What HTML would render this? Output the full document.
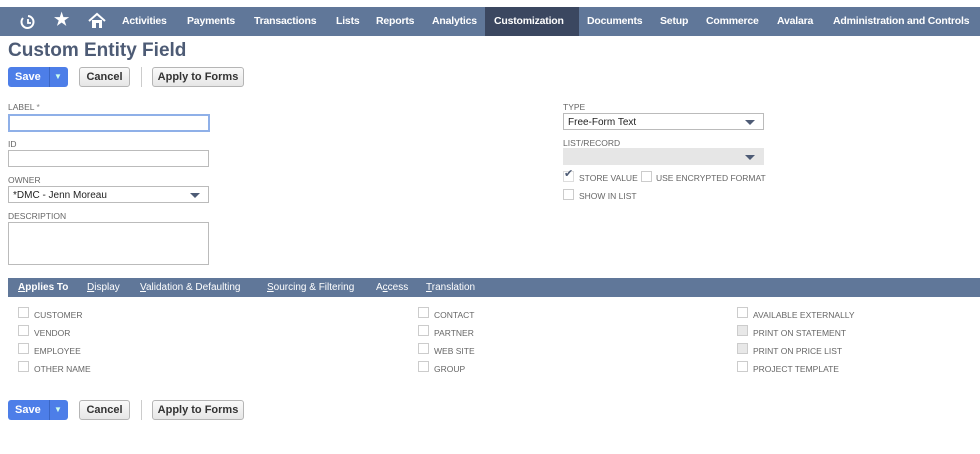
<!DOCTYPE html>
<html><head><style>
*{box-sizing:border-box;margin:0;padding:0}
body{width:980px;height:454px;background:#fff;font-family:"Liberation Sans",sans-serif;position:relative;overflow:hidden;color:#333}
.abs{position:absolute;white-space:nowrap}
.nav{position:absolute;left:0;top:7px;width:980px;height:29px;background:#607799}
.nav span{position:absolute;top:8px;color:#fff;font-weight:bold;font-size:10.5px;white-space:nowrap;letter-spacing:-0.2px}
.act{position:absolute;left:485px;top:0;width:94px;height:29px;background:#3b4760}
h1{position:absolute;left:8px;top:40px;font-size:19px;color:#4d5b75;font-weight:bold}
.btn{position:absolute;height:20px;border:1px solid #b5b5b5;border-radius:3px;background:linear-gradient(#fafafa,#e6e6e6);font-size:11px;font-weight:bold;color:#333;text-align:center;line-height:18px}
.save{position:absolute;height:20px;width:60px;border-radius:3px;background:#4d7ee8;color:#fff;font-size:11px;font-weight:bold;line-height:20px}
.save b{position:absolute;left:7px}
.save i{position:absolute;left:41px;top:0;width:1px;height:20px;background:#3a66c4}
.save em{position:absolute;left:46px;top:0;font-style:normal;font-size:8px;color:#cfe}
.sep{position:absolute;width:1px;height:20px;background:#ccc}
.lbl{position:absolute;font-size:8.5px;color:#666;white-space:nowrap}
.inp{position:absolute;border:1px solid #bbb;background:#fff;height:17px}
.sel{font-size:10px;color:#222;padding:3px 4px}
.tri{position:absolute;right:8px;top:6px;width:0;height:0;border-left:5px solid transparent;border-right:5px solid transparent;border-top:5px solid #4d5b75}
.cb{position:absolute;width:11px;height:11px;border:1px solid #ccc;background:#fff}
.ct{position:absolute;font-size:8.5px;color:#666;white-space:nowrap}
.tabs{position:absolute;left:8px;top:278px;width:972px;height:19px;background:#607799}
.tabs span{position:absolute;top:4px;color:#fff;font-size:10px;white-space:nowrap}
.tabs u{text-decoration:underline}
</style></head><body>
<div class="nav">
<div class="act"></div>
<svg class="abs" style="left:20px;top:6px" width="16" height="17" viewBox="0 0 16 17"><path d="M3 5 A6 6 0 1 0 8 3" fill="none" stroke="#fff" stroke-width="2"/><path d="M8 6v4h3" fill="none" stroke="#fff" stroke-width="1.8"/></svg>
<span style="left:54px;top:3px;font-size:17px">★</span>
<svg class="abs" style="left:88px;top:5px" width="18" height="17" viewBox="0 0 18 17"><path d="M1 9 L9 2 L17 9" fill="none" stroke="#fff" stroke-width="2"/><path d="M4 8v8h10V8" fill="#fff"/><rect x="8" y="11" width="3" height="5" fill="#607799"/></svg>
<span style="left:122px">Activities</span><span style="left:187px">Payments</span><span style="left:254px">Transactions</span><span style="left:336px">Lists</span><span style="left:376px">Reports</span><span style="left:432px">Analytics</span><span style="left:494px">Customization</span><span style="left:587px">Documents</span><span style="left:660px">Setup</span><span style="left:706px">Commerce</span><span style="left:777px">Avalara</span><span style="left:833px">Administration and Controls</span>
</div>
<h1>Custom Entity Field</h1>
<div class="save" style="left:8px;top:67px"><b>Save</b><i></i><em>▼</em></div>
<div class="btn" style="left:79px;top:67px;width:51px">Cancel</div>
<div class="sep" style="left:141px;top:67px"></div>
<div class="btn" style="left:152px;top:67px;width:92px">Apply to Forms</div>

<div class="lbl" style="left:8px;top:102px">LABEL <span style="color:#888">*</span></div>
<div class="inp" style="left:8px;top:114px;width:202px;height:18px;border:2px solid #8fb0e8"></div>
<div class="lbl" style="left:8px;top:139px">ID</div>
<div class="inp" style="left:8px;top:150px;width:201px"></div>
<div class="lbl" style="left:8px;top:175px">OWNER</div>
<div class="inp sel" style="left:8px;top:186px;width:201px">*DMC - Jenn Moreau<div class="tri"></div></div>
<div class="lbl" style="left:8px;top:211px">DESCRIPTION</div>
<div class="inp" style="left:8px;top:222px;width:201px;height:43px"></div>

<div class="lbl" style="left:563px;top:102px">TYPE</div>
<div class="inp sel" style="left:563px;top:113px;width:201px">Free-Form Text<div class="tri"></div></div>
<div class="lbl" style="left:563px;top:138px">LIST/RECORD</div>
<div class="inp" style="left:563px;top:148px;width:201px;background:#e6e6e6;border-color:#e6e6e6"><div class="tri"></div></div>
<div class="cb" style="left:563px;top:171px;border-color:#ddd"></div><div class="ct" style="left:564px;top:167px;font-size:11px;color:#4d5b75">✔</div>
<div class="ct" style="left:579px;top:173px">STORE VALUE</div>
<div class="cb" style="left:641px;top:171px"></div><div class="ct" style="left:656px;top:173px">USE ENCRYPTED FORMAT</div>
<div class="cb" style="left:563px;top:189px"></div><div class="ct" style="left:579px;top:191px">SHOW IN LIST</div>

<div class="tabs">
<span style="left:10px;font-weight:bold"><u>A</u>pplies To</span><span style="left:79px"><u>D</u>isplay</span><span style="left:132px"><u>V</u>alidation &amp; Defaulting</span><span style="left:259px"><u>S</u>ourcing &amp; Filtering</span><span style="left:368px">A<u>c</u>cess</span><span style="left:418px"><u>T</u>ranslation</span>
</div>

<div class="cb" style="left:18px;top:307px"></div><div class="ct" style="left:34px;top:310px">CUSTOMER</div>
<div class="cb" style="left:18px;top:325px"></div><div class="ct" style="left:34px;top:328px">VENDOR</div>
<div class="cb" style="left:18px;top:343px"></div><div class="ct" style="left:34px;top:346px">EMPLOYEE</div>
<div class="cb" style="left:18px;top:361px"></div><div class="ct" style="left:34px;top:364px">OTHER NAME</div>
<div class="cb" style="left:418px;top:307px"></div><div class="ct" style="left:434px;top:310px">CONTACT</div>
<div class="cb" style="left:418px;top:325px"></div><div class="ct" style="left:434px;top:328px">PARTNER</div>
<div class="cb" style="left:418px;top:343px"></div><div class="ct" style="left:434px;top:346px">WEB SITE</div>
<div class="cb" style="left:418px;top:361px"></div><div class="ct" style="left:434px;top:364px">GROUP</div>
<div class="cb" style="left:737px;top:307px"></div><div class="ct" style="left:753px;top:310px">AVAILABLE EXTERNALLY</div>
<div class="cb" style="left:737px;top:325px;background:#e8e8e8"></div><div class="ct" style="left:753px;top:328px">PRINT ON STATEMENT</div>
<div class="cb" style="left:737px;top:343px;background:#e8e8e8"></div><div class="ct" style="left:753px;top:346px">PRINT ON PRICE LIST</div>
<div class="cb" style="left:737px;top:361px"></div><div class="ct" style="left:753px;top:364px">PROJECT TEMPLATE</div>

<div class="save" style="left:8px;top:400px"><b>Save</b><i></i><em>▼</em></div>
<div class="btn" style="left:79px;top:400px;width:51px">Cancel</div>
<div class="sep" style="left:141px;top:400px"></div>
<div class="btn" style="left:152px;top:400px;width:92px">Apply to Forms</div>
</body></html>
